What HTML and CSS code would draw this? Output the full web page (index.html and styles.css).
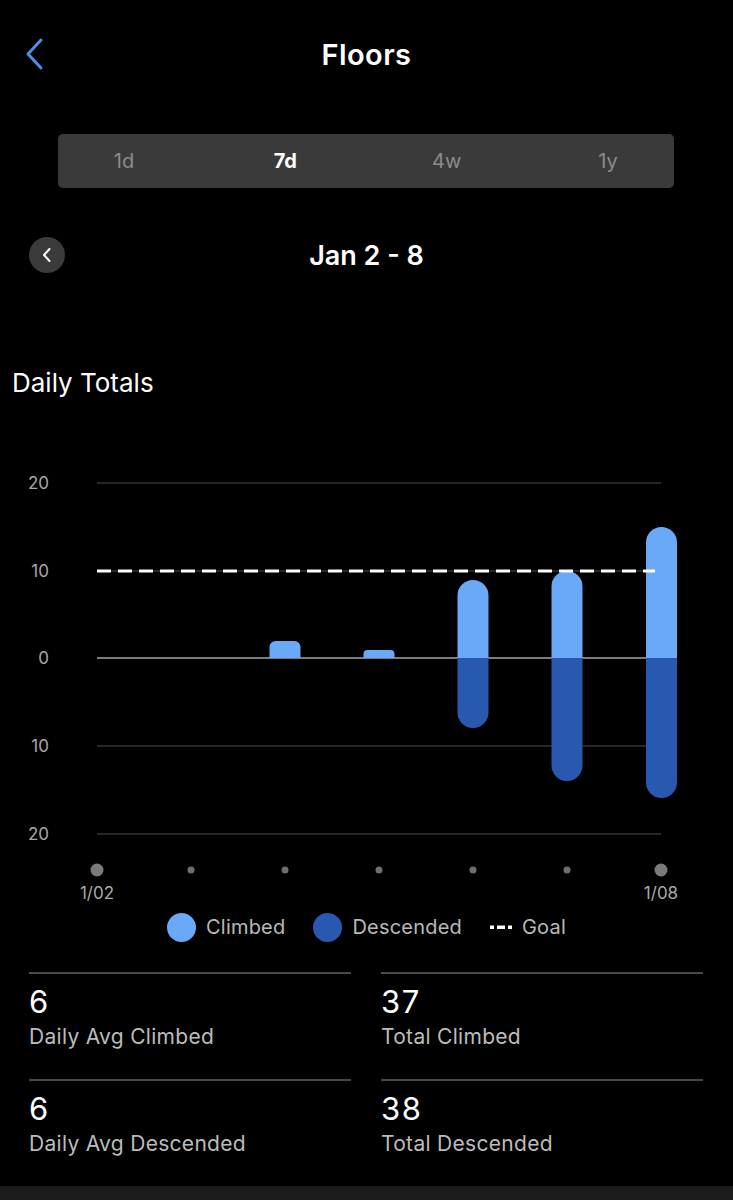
FILE: index.html
```html
<!DOCTYPE html>
<html lang="en">
<head>
<meta charset="utf-8">
<title>Floors</title>
<link rel="stylesheet" href="styles.css">
</head>
<body>
<div class="screen">
  <header class="topbar">
    <div class="back">
      <svg width="24" height="34" viewBox="0 0 24 34"><path d="M17 3 L4 17 L17 31" fill="none" stroke="#4b8fe9" stroke-width="3" stroke-linecap="round" stroke-linejoin="round"/></svg>
    </div>
    <h1 class="title">Floors</h1>
    <div></div>
  </header>

  <nav class="segments">
    <span class="seg">1d</span>
    <span class="seg active">7d</span>
    <span class="seg">4w</span>
    <span class="seg">1y</span>
  </nav>

  <div class="daterow">
    <div class="prev">
      <svg width="12" height="16" viewBox="0 0 12 16"><path d="M8.5 2 L3 8 L8.5 14" fill="none" stroke="#fff" stroke-width="2" stroke-linecap="round" stroke-linejoin="round"/></svg>
    </div>
    <div class="range">Jan 2 - 8</div>
    <div></div>
  </div>

  <h2 class="section">Daily Totals</h2>

  <svg class="chart" width="733" height="410" viewBox="0 0 733 410">
    <g class="ylabels" font-size="17" fill="#a9a9a9" text-anchor="end">
      <text x="49" y="19">20</text>
      <text x="49" y="107">10</text>
      <text x="49" y="194">0</text>
      <text x="49" y="282">10</text>
      <text x="49" y="370">20</text>
    </g>
    <g stroke="#353535" stroke-width="1.5">
      <line x1="97" y1="13" x2="661" y2="13"/>
      <line x1="97" y1="101" x2="661" y2="101"/>
      <line x1="97" y1="276" x2="661" y2="276"/>
      <line x1="97" y1="364" x2="661" y2="364"/>
    </g>
    <line x1="97" y1="188" x2="661" y2="188" stroke="#7c7c7c" stroke-width="2"/>
    <!-- climbed -->
    <g fill="#6aa8f8">
      <path d="M269.5 188 V177 A6 6 0 0 1 275.5 171 H294.5 A6 6 0 0 1 300.5 177 V188 Z"/>
      <path d="M363.5 188 V184 A4 4 0 0 1 367.5 180 H390.5 A4 4 0 0 1 394.5 184 V188 Z"/>
      <path d="M457.5 188 V125.5 A15.5 15.5 0 0 1 488.5 125.5 V188 Z"/>
      <path d="M551.5 188 V116.5 A15.5 15.5 0 0 1 582.5 116.5 V188 Z"/>
      <path d="M646 188 V72.5 A15.5 15.5 0 0 1 677 72.5 V188 Z"/>
    </g>
    <!-- descended -->
    <g fill="#2858b0">
      <path d="M457.5 188 V242.5 A15.5 15.5 0 0 0 488.5 242.5 V188 Z"/>
      <path d="M551.5 188 V295.5 A15.5 15.5 0 0 0 582.5 295.5 V188 Z"/>
      <path d="M646 188 V312.5 A15.5 15.5 0 0 0 677 312.5 V188 Z"/>
    </g>
    <line x1="97" y1="101" x2="655" y2="101" stroke="#fff" stroke-width="3" stroke-dasharray="14 7"/>
    <g fill="#6e6e6e">
      <circle cx="97" cy="400" r="6.5" fill="#7a7a7a"/>
      <circle cx="191" cy="400" r="3.5"/>
      <circle cx="285" cy="400" r="3.5"/>
      <circle cx="379" cy="400" r="3.5"/>
      <circle cx="473" cy="400" r="3.5"/>
      <circle cx="567" cy="400" r="3.5"/>
      <circle cx="661" cy="400" r="6.5" fill="#7a7a7a"/>
    </g>
  </svg>

  <div class="xlabels">
    <span class="xl first">1/02</span>
    <span class="xl last">1/08</span>
  </div>

  <div class="legend">
    <span class="item"><span class="swatch climbed"></span>Climbed</span>
    <span class="item"><span class="swatch descended"></span>Descended</span>
    <span class="item"><svg class="goalicon" width="22" height="6" viewBox="0 0 22 6"><rect x="0" y="1.5" width="4" height="3.5" fill="#fff"/><rect x="7" y="1.5" width="8" height="3.5" fill="#fff"/><rect x="18" y="1.5" width="4" height="3.5" fill="#fff"/></svg>Goal</span>
  </div>

  <section class="stats">
    <div class="stat"><div class="num">6</div><div class="lbl">Daily Avg Climbed</div></div>
    <div class="stat"><div class="num">37</div><div class="lbl">Total Climbed</div></div>
    <div class="stat"><div class="num">6</div><div class="lbl">Daily Avg Descended</div></div>
    <div class="stat"><div class="num">38</div><div class="lbl">Total Descended</div></div>
  </section>

  <div class="bottombar"></div>
</div>
</body>
</html>
```
FILE: styles.css
```css
* { box-sizing: border-box; }
html, body { margin: 0; padding: 0; background: #000; }
body {
  font-family: Inter, "Noto Sans", "Liberation Sans", sans-serif;
  color: #fff;
  width: 733px;
  height: 1200px;
  overflow: hidden;
}
.screen { display: flex; flex-direction: column; height: 1200px; }

.topbar {
  height: 108px;
  display: grid;
  grid-template-columns: 1fr auto 1fr;
  align-items: center;
}
.back { padding-left: 24px; display: flex; align-items: center; }
.title {
  margin: 0;
  font-size: 29px;
  font-weight: 600;
  letter-spacing: 0.4px;
}

.segments {
  margin: 26px 59px 0 58px;
  height: 54px;
  background: #3a3a3a;
  border-radius: 5px;
  display: flex;
  justify-content: space-between;
  align-items: center;
  padding: 0 46px;
}
.seg {
  width: 40px;
  text-align: center;
  font-size: 20px;
  color: #8c8c8c;
}
.seg.active { color: #fff; font-weight: 700; }

.daterow {
  margin-top: 49px;
  height: 36px;
  padding: 0 29px;
  display: grid;
  grid-template-columns: 1fr auto 1fr;
  align-items: center;
}
.prev {
  width: 36px;
  height: 36px;
  border-radius: 50%;
  background: #3b3b3b;
  display: flex;
  align-items: center;
  justify-content: center;
}
.range { font-size: 27px; font-weight: 600; letter-spacing: 0; }

.section {
  margin: 95px 0 0 12px;
  font-size: 26px;
  line-height: 30px;
  font-weight: 400;
}

.chart { display: block; margin-top: 72px; font-family: Inter, "Noto Sans", sans-serif; }

.xlabels {
  height: 26px;
  display: grid;
  grid-template-columns: repeat(7, 94px);
  padding-left: 50px;
  align-items: center;
}
.xl { font-size: 17px; color: #a9a9a9; text-align: center; }
.xl.first { grid-column: 1; }
.xl.last { grid-column: 7; }

.legend {
  margin-top: 6px;
  height: 30px;
  display: flex;
  justify-content: center;
  align-items: center;
  gap: 28px;
  font-size: 20px;
  letter-spacing: 0.2px;
  color: #b9b9b9;
}
.item { display: flex; align-items: center; gap: 10px; }
.swatch { width: 29px; height: 29px; border-radius: 50%; display: inline-block; }
.swatch.climbed { background: #6aa8f8; }
.swatch.descended { background: #2858b0; }
.goalicon { display: block; }

.stats {
  margin-top: 30px;
  padding: 0 30px 0 29px;
  display: grid;
  grid-template-columns: 1fr 1fr;
  column-gap: 30px;
}
.stat {
  border-top: 2px solid #4a4a4a;
  height: 107px;
  padding-top: 11px;
}
.num { font-size: 31px; line-height: 34px; color: #fff; letter-spacing: 1.5px; }
.lbl { font-size: 21px; line-height: 26px; color: #bcbcbc; margin-top: 5px; letter-spacing: 0.3px; }

.bottombar { margin-top: auto; height: 14px; background: #1c1c1c; }
```
